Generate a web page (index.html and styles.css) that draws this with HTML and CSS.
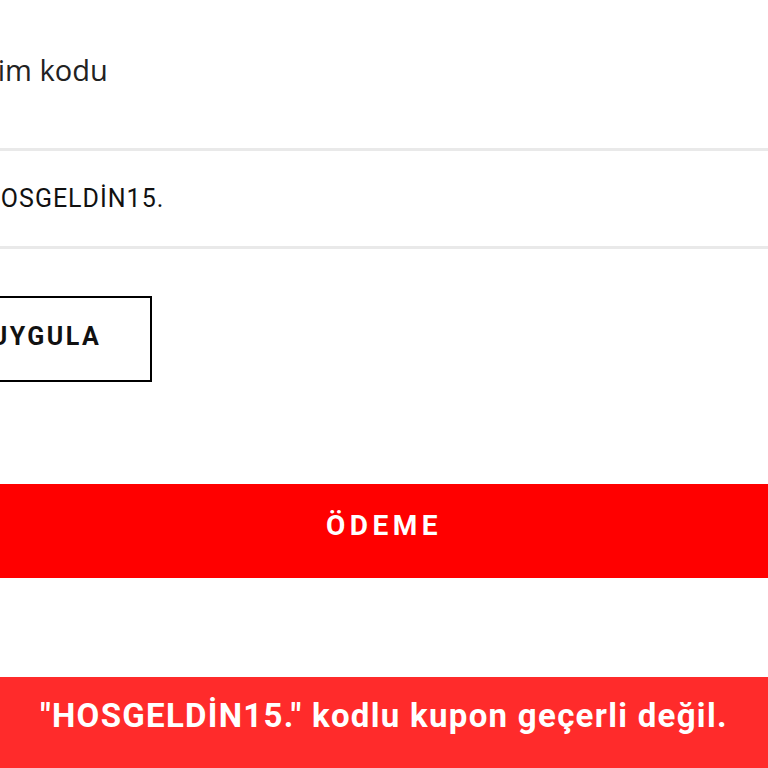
FILE: index.html
```html
<!DOCTYPE html>
<html lang="tr">
  <head>
    <meta charset="UTF-8" />
    <meta name="viewport" content="width=device-width, initial-scale=1.0" />
    <title>Ödeme</title>
    <link rel="stylesheet" href="styles.css">
  </head>
  <body>
    <main class="checkout">
      <form class="coupon">
        <label class="coupon-label" for="coupon">İndirim kodu</label>
        <div class="coupon-field">
          <input id="coupon" type="text" value="HOSGELDİN15." />
        </div>
        <button type="button" class="btn-apply">UYGULA</button>
      </form>

      <button type="button" class="btn-pay">ÖDEME</button>
    </main>

    <div class="toast">"HOSGELDİN15." kodlu kupon geçerli değil.</div>
  </body>
</html>
```

FILE: styles.css
```css
* {
  margin: 0;
  padding: 0;
  box-sizing: border-box;
}

body {
  background: #fff;
  overflow: hidden;
  font-family: Roboto, "Noto Sans", sans-serif;
  color: #111;
}

.checkout {
  width: 888px;
  margin-left: -60px;
  padding-top: 52px;
}

.coupon {
  display: flex;
  flex-direction: column;
  align-items: flex-start;
}

.coupon-label {
  margin-left: -5px;
  font-family: "Open Sans", "Noto Sans", sans-serif;
  font-size: 29px;
  line-height: 36px;
  color: #222;
}

.coupon-field {
  width: 100%;
  margin-top: 60px;
  border-top: 3px solid #e9e9e9;
  border-bottom: 3px solid #e9e9e9;
}

.coupon-field input {
  display: block;
  width: 100%;
  height: 95px;
  border: 0;
  outline: 0;
  padding: 0 42px;
  font-family: Roboto, sans-serif;
  font-size: 25px;
  letter-spacing: 1px;
  color: #111;
  background: #fff;
}

.btn-apply {
  margin-top: 47px;
  width: 212px;
  height: 86px;
  padding-bottom: 6px;
  border: 2px solid #000;
  background: #fff;
  font-family: Roboto, sans-serif;
  font-weight: bold;
  font-size: 25px;
  letter-spacing: 2.5px;
  color: #111;
}

.btn-pay {
  display: block;
  width: 100%;
  height: 94px;
  margin-top: 102px;
  padding-bottom: 12px;
  border: 0;
  background: #ff0000;
  color: #fff;
  font-family: Roboto, sans-serif;
  font-weight: bold;
  font-size: 28px;
  letter-spacing: 4.5px;
}

.toast {
  position: fixed;
  left: 0;
  right: 0;
  bottom: 0;
  height: 91px;
  padding-bottom: 14px;
  display: flex;
  justify-content: center;
  align-items: center;
  background: #ff2b2b;
  color: #fff;
  font-family: Roboto, sans-serif;
  font-weight: bold;
  font-size: 33px;
  letter-spacing: 1.3px;
}
```
